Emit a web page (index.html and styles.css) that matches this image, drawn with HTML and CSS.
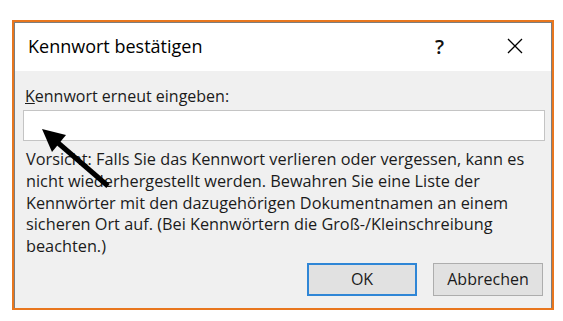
FILE: index.html
```html
<!DOCTYPE html>
<html lang="de">
<head>
<meta charset="UTF-8" />
<meta name="viewport" content="width=device-width, initial-scale=1" />
<title>Kennwort bestätigen</title>
<link rel="stylesheet" href="styles.css">
</head>
<body>

  <div class="window" role="dialog" aria-label="Kennwort bestätigen">
    <div class="dialog">
      <div class="titlebar">
        <span class="title">Kennwort bestätigen</span>
        <span class="help">?</span>
        <span class="close">
          <svg width="16" height="16" viewBox="0 0 16 16">
            <path d="M1 1 L15 15 M15 1 L1 15" stroke="#000" stroke-width="1.3" fill="none"/>
          </svg>
        </span>
      </div>

      <div class="content">
        <label class="label" for="pw"><u>K</u>ennwort erneut eingeben:</label>
        <input class="field" id="pw" type="password">
        <p class="note">
          Vorsicht: Falls Sie das Kennwort verlieren oder vergessen, kann es<br>
          nicht wiederhergestellt werden. Bewahren Sie eine Liste der<br>
          Kennwörter mit den dazugehörigen Dokumentnamen an einem<br>
          sicheren Ort auf. (Bei Kennwörtern die Groß-/Kleinschreibung<br>
          beachten.)
        </p>
        <div class="actions">
          <button class="btn btn-default">OK</button>
          <button class="btn">Abbrechen</button>
        </div>
      </div>
    </div>
  </div>

  <!-- annotation arrow pointing at the input -->
  <svg class="arrow" width="563" height="321" viewBox="0 0 563 321">
    <line x1="108" y1="186" x2="57" y2="142" stroke="#000" stroke-width="5"/>
    <polygon points="42,129 66,135 52,152" fill="#000"/>
  </svg>

</body>
</html>
```

FILE: styles.css
```css
* {
  box-sizing: border-box;
}

body {
  margin: 0;
  background: #fff;
  font-family: 'Open Sans', 'Noto Sans', sans-serif;
  color: #1b1b1b;
}

.window {
  margin: 20px 0 0 12px;
  width: 542px;
  height: 290px;
  border: 2px solid #e8761e;
}

.dialog {
  height: 100%;
  border: 1px solid #7d7d7d;
  border-bottom: none;
  display: flex;
  flex-direction: column;
}

.titlebar {
  height: 48px;
  background: #fff;
  display: flex;
  align-items: center;
  padding: 0 0 2px 13px;
}

.title {
  font-size: 18px;
  color: #000;
  flex: 1;
}

.help {
  font-size: 20px;
  font-weight: 600;
  color: #111;
  width: 20px;
  margin-right: 52px;
}

.close {
  display: flex;
  margin-right: 28px;
}

.content {
  flex: 1;
  background: #f0f0f0;
  padding: 15px 6px 0 8px;
}

.label {
  display: block;
  font-size: 16px;
  line-height: 20px;
  padding-left: 2px;
}

.field {
  display: block;
  margin-top: 4px;
  width: 522px;
  height: 31px;
  border: 1px solid #c4c4c4;
  background: #fff;
  outline: none;
}

.note {
  margin: 8px 0 0 3px;
  font-size: 16.3px;
  line-height: 21.75px;
}

.actions {
  display: flex;
  justify-content: flex-end;
  gap: 16px;
  margin-top: 5px;
  padding-right: 2px;
}

.btn {
  width: 110px;
  height: 33px;
  background: #e1e1e1;
  border: 1px solid #adadad;
  font-family: inherit;
  font-size: 16px;
  color: #1b1b1b;
  padding: 0;
}

.btn-default {
  border: 2px solid #2f86d6;
}

.arrow {
  position: absolute;
  left: 0;
  top: 0;
  pointer-events: none;
}
```
